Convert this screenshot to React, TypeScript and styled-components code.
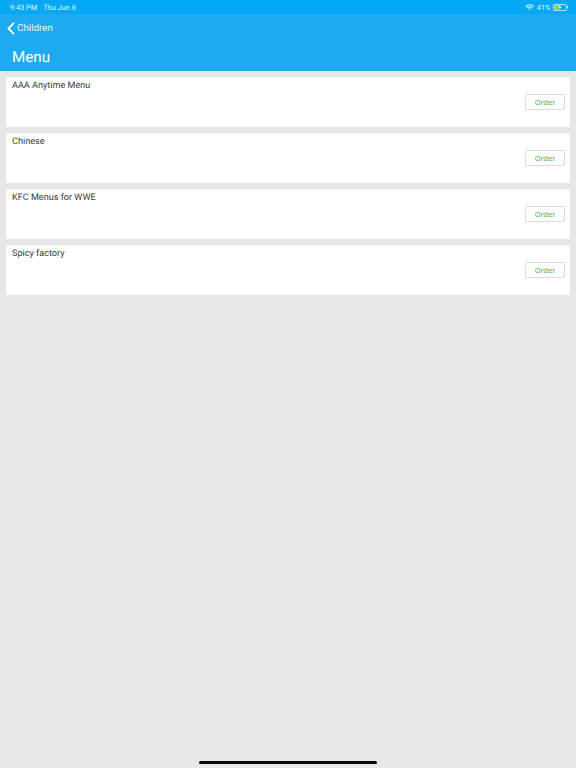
import React from "react";
import styled, { createGlobalStyle } from "styled-components";

const Global = createGlobalStyle`
  html, body { margin: 0; padding: 0; }
  body {
    background: #e7e7e7;
    font-family: "Roboto", "Liberation Sans", sans-serif;
    text-rendering: geometricPrecision;
  }
`;

const Page = styled.div`
  width: 576px;
  height: 768px;
  display: flex;
  flex-direction: column;
  overflow: hidden;
  position: relative;
  background: #e7e7e7;
`;

const StatusBar = styled.div`
  height: 14px;
  flex: none;
  background: #03a9f4;
  color: #e3f5fe;
  font-size: 7.4px;
  display: flex;
  align-items: center;
  justify-content: space-between;
  padding: 0 9px 0 10px;
`;

const StatusGroup = styled.div<{ $gap: number }>`
  display: flex;
  align-items: center;
  gap: ${(p) => p.$gap}px;
`;

const Header = styled.header`
  height: 57px;
  flex: none;
  background: #1eaaee;
  color: #fff;
  display: flex;
  flex-direction: column;
`;

const NavRow = styled.div`
  height: 28px;
  flex: none;
  display: flex;
  align-items: center;
  padding-left: 7px;
  gap: 2px;
  font-size: 9.8px;
  color: #e6f6fe;
`;

const Title = styled.h1`
  margin: 0;
  padding: 5px 0 0 12px;
  font-weight: 400;
  font-size: 15.2px;
  line-height: 20px;
`;

const List = styled.main`
  display: flex;
  flex-direction: column;
  gap: 6px;
  padding: 6px 6px 0;
`;

const Card = styled.section`
  height: 50px;
  box-sizing: border-box;
  background: #fff;
  border-radius: 2px;
  padding: 3px 5px 0 6px;
  display: flex;
  flex-direction: column;
`;

const CardTitle = styled.div`
  font-size: 9.1px;
  line-height: 13px;
  color: #3a3a3a;
`;

const OrderButton = styled.button`
  align-self: flex-end;
  margin-top: 1px;
  width: 40px;
  height: 16px;
  padding: 0;
  background: #fff;
  border: 1px solid #dcdcdc;
  border-radius: 1px;
  color: #4caf50;
  font-family: inherit;
  font-size: 8px;
  letter-spacing: 0.2px;
`;

const HomeIndicator = styled.div`
  position: absolute;
  left: 199px;
  bottom: 4px;
  width: 178px;
  height: 3px;
  border-radius: 2px;
  background: #0a0a0a;
`;

const BatteryBody = styled.div`
  position: relative;
  width: 12px;
  height: 5px;
  border: 0.5px solid #b3e5fc;
  border-radius: 2px;

  &::after {
    content: "";
    position: absolute;
    right: -1.5px;
    top: 1.5px;
    width: 1px;
    height: 2px;
    background: #b3e5fc;
  }
`;

const BatteryFill = styled.div`
  width: 5px;
  height: 100%;
  background: #76d672;
  border-radius: 1px;
`;

const BatteryBolt = styled.svg`
  position: absolute;
  left: 4px;
  top: -0.5px;
`;

const menus = ["AAA Anytime Menu", "Chinese", "KFC Menus for WWE", "Spicy factory"];

export default function App() {
  return (
    <Page>
      <Global />
      <StatusBar>
        <StatusGroup $gap={6}>
          <span>9:43 PM</span>
          <span>Thu Jun 6</span>
        </StatusGroup>
        <StatusGroup $gap={2.5}>
          <svg width="9" height="7" viewBox="0 0 18 14" fill="none" stroke="#e3f5fe" strokeWidth="2.2">
            <path d="M1 5 C5.5 0.5 12.5 0.5 17 5" />
            <path d="M4 8 C7 5.5 11 5.5 14 8" />
            <path d="M6.8 11 C8 10 10 10 11.2 11" />
          </svg>
          <span>41%</span>
          <BatteryBody>
            <BatteryFill />
            <BatteryBolt width="4" height="6" viewBox="0 0 4 6" fill="#fff">
              <path d="M2.4 0 L0.4 3.4 H1.8 L1.4 6 L3.6 2.5 H2.1 Z" />
            </BatteryBolt>
          </BatteryBody>
        </StatusGroup>
      </StatusBar>
      <Header>
        <NavRow>
          <svg width="8" height="13" viewBox="0 0 8 13" fill="none" stroke="#fff" strokeWidth="1.8">
            <path d="M7 0.8 L1.4 6.5 L7 12.2" />
          </svg>
          <span>Children</span>
        </NavRow>
        <Title>Menu</Title>
      </Header>
      <List>
        {menus.map((m) => (
          <Card key={m}>
            <CardTitle>{m}</CardTitle>
            <OrderButton>Order</OrderButton>
          </Card>
        ))}
      </List>
      <HomeIndicator />
    </Page>
  );
}
